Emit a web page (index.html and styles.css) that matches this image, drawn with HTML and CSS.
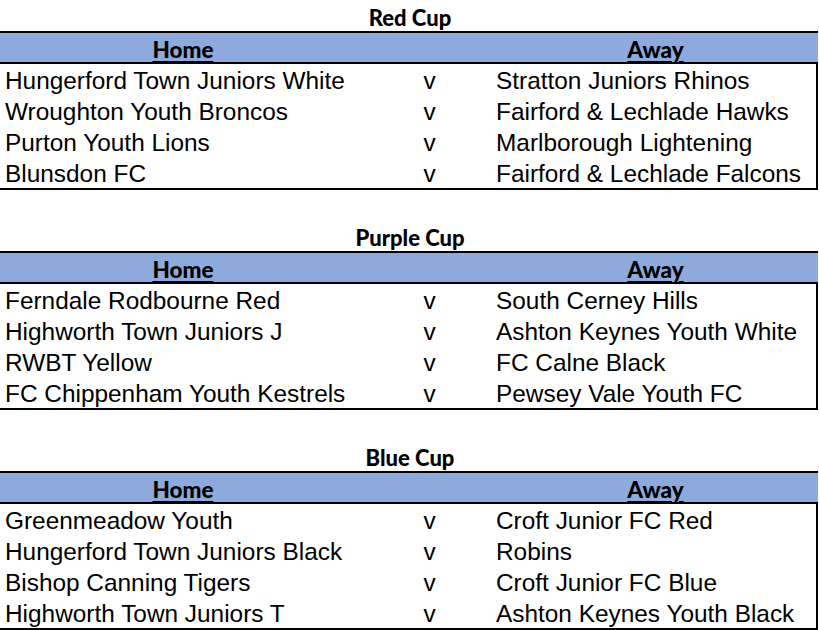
FILE: index.html
```html
<!DOCTYPE html>
<html lang="en">
<head>
<meta charset="utf-8">
<title>Cup Fixtures</title>
<link rel="stylesheet" href="styles.css">
</head>
<body>
<main class="sheet">
  <section class="cup">
    <h2 class="cup-title">Red Cup</h2>
    <div class="fixtures">
      <div class="head"><span class="col-home">Home</span><span class="col-v"></span><span class="col-away">Away</span></div>
      <div class="row"><span class="home">Hungerford Town Juniors White</span><span class="vs">v</span><span class="away">Stratton Juniors Rhinos</span></div>
      <div class="row"><span class="home">Wroughton Youth Broncos</span><span class="vs">v</span><span class="away">Fairford &amp; Lechlade Hawks</span></div>
      <div class="row"><span class="home">Purton Youth Lions</span><span class="vs">v</span><span class="away">Marlborough Lightening</span></div>
      <div class="row"><span class="home">Blunsdon FC</span><span class="vs">v</span><span class="away">Fairford &amp; Lechlade Falcons</span></div>
    </div>
  </section>
  <section class="cup">
    <h2 class="cup-title">Purple Cup</h2>
    <div class="fixtures">
      <div class="head"><span class="col-home">Home</span><span class="col-v"></span><span class="col-away">Away</span></div>
      <div class="row"><span class="home">Ferndale Rodbourne Red</span><span class="vs">v</span><span class="away">South Cerney Hills</span></div>
      <div class="row"><span class="home">Highworth Town Juniors J</span><span class="vs">v</span><span class="away">Ashton Keynes Youth White</span></div>
      <div class="row"><span class="home">RWBT Yellow</span><span class="vs">v</span><span class="away">FC Calne Black</span></div>
      <div class="row"><span class="home">FC Chippenham Youth Kestrels</span><span class="vs">v</span><span class="away">Pewsey Vale Youth FC</span></div>
    </div>
  </section>
  <section class="cup">
    <h2 class="cup-title">Blue Cup</h2>
    <div class="fixtures">
      <div class="head"><span class="col-home">Home</span><span class="col-v"></span><span class="col-away">Away</span></div>
      <div class="row"><span class="home">Greenmeadow Youth</span><span class="vs">v</span><span class="away">Croft Junior FC Red</span></div>
      <div class="row"><span class="home">Hungerford Town Juniors Black</span><span class="vs">v</span><span class="away">Robins</span></div>
      <div class="row"><span class="home">Bishop Canning Tigers</span><span class="vs">v</span><span class="away">Croft Junior FC Blue</span></div>
      <div class="row"><span class="home">Highworth Town Juniors T</span><span class="vs">v</span><span class="away">Ashton Keynes Youth Black</span></div>
    </div>
  </section>
</main>
</body>
</html>
```
FILE: styles.css
```css
html, body {
  margin: 0;
  padding: 0;
  background: #ffffff;
}

.sheet {
  width: 818px;
  overflow: hidden;
  height: 630px;
}

.cup {
  margin-bottom: 30px;
}

.cup-title {
  margin: 0;
  height: 31px;
  font-family: Lato, "Open Sans", sans-serif;
  font-weight: 900;
  font-size: 22px;
  line-height: 36px;
  text-align: center;
  color: #000;
  padding-left: 2px;
}

.fixtures {
  border-top: 2px solid #000;
  border-bottom: 2px solid #000;
}

.head,
.row {
  display: grid;
  grid-template-columns: 366px 127px 1fr;
}

.head {
  height: 29px;
  background: #8ea9db;
  border-bottom: 2px solid #000;
  font-family: Lato, "Open Sans", sans-serif;
  font-weight: 900;
  font-size: 22.5px;
  line-height: 34px;
  text-align: center;
}

.col-home,
.col-away {
  text-decoration: underline;
  text-decoration-thickness: 2px;
  text-underline-offset: 3px;
}

.row {
  height: 31px;
  border-right: 2px solid #000;
  font-family: "Liberation Sans", Arial, sans-serif;
  font-size: 24.4px;
  line-height: 33px;
  color: #000;
  white-space: nowrap;
}

.home {
  padding-left: 5px;
}

.vs {
  text-align: center;
}

.away {
  padding-left: 3px;
}
```
